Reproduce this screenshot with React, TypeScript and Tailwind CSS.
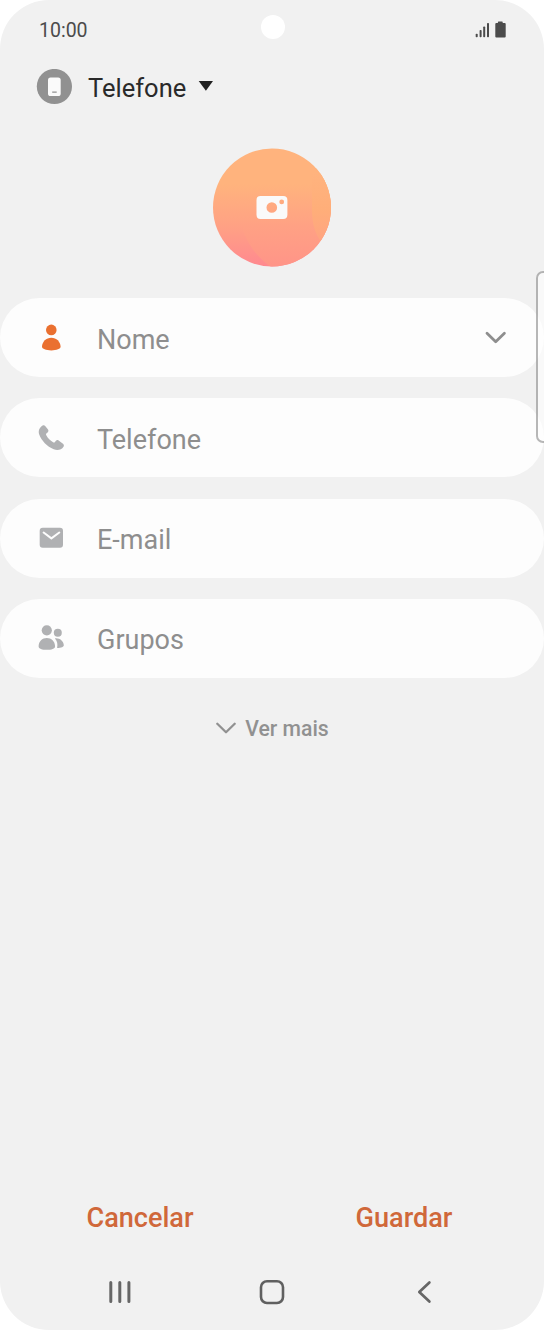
import type { ReactNode } from "react";

function PersonIcon() {
  return (
    <svg width="28" height="30" viewBox="0 0 28 30" fill="#ea7030">
      <circle cx="14.300" cy="6.900" r="5.300" />
      <path d="M5 23.600C5.200 18.600 9.100 14.700 14.300 14.700s9.100 3.900 9.300 8.900c0 2.500-4 3.800-9.300 3.800S5 26.100 5 23.600Z" />
    </svg>
  );
}

function PhoneIcon() {
  return (
    <svg width="28" height="30" viewBox="0 0 28 30" fill="#b0b1b3">
      <path d="M5.300 2.800c1.100-.8 2.300-.5 3.100.5l2.600 3.300c.7 1 .5 2-.4 2.800l-1 .9c-.7.6-.7 1.200-.3 2 1.700 3.100 3.800 5.200 6.800 6.900.7.4 1.300.3 1.900-.3l.9-1.100c.8-.9 1.800-1 2.700-.3l4.400 3.200c1 .8 1.200 1.900.5 3-1.900 2.900-5.700 4.300-9.800 2.600C10.100 23.500 4.400 17.600 2.200 11.500 1 8 2.300 4.900 5.300 2.800Z" />
    </svg>
  );
}

function MailIcon() {
  return (
    <svg width="28" height="30" viewBox="0 0 28 30">
      <rect x="2.700" y="4.800" width="23.300" height="20" rx="3" fill="#b0b1b3" />
      <path d="M6.600 9.500 14.400 15.400 22.300 9.500" fill="none" stroke="#fdfdfd" strokeWidth="2" strokeLinecap="round" strokeLinejoin="round" />
    </svg>
  );
}

function GroupIcon() {
  return (
    <svg width="28" height="30" viewBox="0 0 28 30" fill="#b0b1b3">
      <circle cx="9.800" cy="7.300" r="5.100" />
      <circle cx="20.800" cy="9.700" r="4" />
      <path d="M1.600 23.200c.2-4.700 3.600-8.100 8.200-8.100s8.100 3.400 8.300 8.100c0 2.700-3.700 3.600-8.300 3.600s-8.200-.9-8.200-3.600Z" />
      <path d="M17.900 15.400c4.600-.6 8.500 2.500 8.900 6.500.2 1.800-2.500 2.900-6.700 3.100.8-3.800.2-7-2.200-9.600Z" />
    </svg>
  );
}

function Field({ icon, label, children }: { icon: ReactNode; label: string; children?: ReactNode }) {
  return (
    <div className="flex h-[79px] items-center rounded-full bg-[#fdfdfd] px-[37px]">
      {icon}
      <span className="ml-[32px] flex-1 pt-[4px] text-[27px] leading-[32px] text-[#8e8e8e]">{label}</span>
      {children}
    </div>
  );
}

function StatusBar() {
  return (
    <div className="flex h-[60px] items-center justify-between pr-[37px] pl-[39px] text-[#4b4b4b]">
      <span className="pt-[2px] text-[19.500px] leading-[24px]">10:00</span>
      <svg width="32" height="18" viewBox="0 0 32 18" fill="#4b4b4b">
        <rect x="0.700" y="12.700" width="2" height="3.500" rx="0.800" />
        <rect x="4.600" y="9" width="2" height="7.200" rx="0.800" />
        <rect x="8.200" y="5.500" width="2" height="10.700" rx="0.800" />
        <rect x="12" y="1.900" width="2" height="14.300" rx="0.800" />
        <path d="M23.500 0.500h3.600q.6 0 .6.600v1h2q1 0 1 1v12.300q0 1-1 1h-8.400q-1 0-1-1V3.100q0-1 1-1H22.900v-1q0-.6.600-.6Z" />
      </svg>
    </div>
  );
}

export default function App() {
  return (
    <div className="h-[1330px] w-[544px] bg-white font-['Roboto',sans-serif]">
      <div className="relative flex h-full flex-col overflow-hidden rounded-[49px] bg-[#f1f1f1]">
        <div className="absolute top-[15px] left-[261px] size-[24px] rounded-full bg-white" />
        <StatusBar />

        <div className="flex h-[54px] items-center pl-[36px]">
          <svg width="36" height="36" viewBox="0 0 36 36">
            <circle cx="18.400" cy="17.500" r="17.600" fill="#919191" />
            <rect x="12" y="8.500" width="12.700" height="18.500" rx="2.600" fill="#fafafa" />
            <path d="M16.200 23.100h4.500" stroke="#919191" strokeWidth="1.400" />
          </svg>
          <span className="ml-[16px] pt-[2px] text-[25.500px] leading-[32px] text-[#2a2a2a]">Telefone</span>
          <svg className="mb-[2px] ml-[12px]" width="16" height="12" viewBox="0 0 16 12">
            <path d="M0.700 1h14.300L7.900 10.800Z" fill="#222" />
          </svg>
        </div>

        <div className="mt-[34px] flex justify-center">
          <svg width="120" height="120" viewBox="0 0 120 120">
            <defs>
              <linearGradient id="base" gradientUnits="userSpaceOnUse" x1="0" y1="0" x2="0" y2="120">
                <stop offset="0.300" stopColor="#ffb37d" />
                <stop offset="0.650" stopColor="#ffa184" />
                <stop offset="1" stopColor="#ff8890" />
              </linearGradient>
              <linearGradient id="veil" gradientUnits="userSpaceOnUse" x1="0" y1="0" x2="0" y2="120">
                <stop offset="0.300" stopColor="#ffb37d" />
                <stop offset="0.650" stopColor="#ffa184" />
                <stop offset="1" stopColor="#ff9488" />
              </linearGradient>
              <linearGradient id="side" x1="0" y1="0" x2="0" y2="1">
                <stop offset="0" stopColor="#ffb37e" />
                <stop offset="0.500" stopColor="#ffae79" />
                <stop offset="1" stopColor="#ffa282" />
              </linearGradient>
              <clipPath id="disc">
                <circle cx="60" cy="59.500" r="59" />
              </clipPath>
            </defs>
            <g clipPath="url(#disc)">
              <rect width="120" height="120" fill="url(#base)" />
              <path d="M28 20H120V120H60C43 108 28 88 28 63Z" fill="url(#veil)" />
              <path d="M100 25H120V98H112C103 87 100 76 100 62Z" fill="url(#side)" />
            </g>
            <path
              fillRule="evenodd"
              fill="#fafafa"
              d="M48.500 48h22.700q4.200 0 4.200 4.200v14.600q0 4.200-4.200 4.200H48.500q-4 0-4-4.200V52.200q0-4.200 4-4.200ZM59.800 54.200a5.300 5.300 0 1 0 0 10.600a5.300 5.300 0 1 0 0-10.600ZM69.700 51.500a2.400 2.400 0 1 0 0 4.800a2.400 2.400 0 1 0 0-4.800Z"
            />
          </svg>
        </div>

        <div className="mt-[30.300px] flex flex-col gap-[21.200px]">
          <Field icon={<PersonIcon />} label="Nome">
            <svg width="22" height="14" viewBox="0 0 22 14" fill="none" stroke="#8e8e8e" strokeWidth="2.800" strokeLinecap="round" strokeLinejoin="round">
              <path d="M2 2.300 10.700 10.800 19.400 2.300" />
            </svg>
          </Field>
          <Field icon={<PhoneIcon />} label="Telefone" />
          <Field icon={<MailIcon />} label="E-mail" />
          <Field icon={<GroupIcon />} label="Grupos" />
        </div>

        <div className="mt-[34.600px] flex items-center justify-center pl-[1px]">
          <svg width="20" height="13" viewBox="0 0 20 13" fill="none" stroke="#919191" strokeWidth="2.300" strokeLinecap="round" strokeLinejoin="round">
            <path d="M1.300 1.700 10 10.200 18.700 1.700" />
          </svg>
          <span className="ml-[9px] pt-[1px] text-[21.200px] leading-[32px] font-medium text-[#919191]">Ver mais</span>
        </div>

        <div className="mt-auto flex h-[40px] items-center px-[8px] text-[27.100px] leading-[32px] font-medium text-[#d0683a]">
          <span className="flex-1 text-center">Cancelar</span>
          <span className="flex-1 text-center">Guardar</span>
        </div>

        <div className="mt-[39px] mb-[23px] flex h-[30px] items-center pl-[107px]">
          <svg width="26" height="30" viewBox="0 0 26 30" stroke="#666" strokeWidth="3" strokeLinecap="round">
            <path d="M3.800 5.500V24.500M12.800 5.500V24.500M21.900 5.500V24.500" />
          </svg>
          <svg className="ml-[126px]" width="26" height="30" viewBox="0 0 26 30" fill="none" stroke="#606060" strokeWidth="2.600">
            <rect x="2" y="4.200" width="22" height="21.800" rx="6" />
          </svg>
          <svg className="ml-[131px]" width="16" height="30" viewBox="0 0 16 30" fill="none" stroke="#666" strokeWidth="2.700" strokeLinecap="round" strokeLinejoin="round">
            <path d="M13.400 5.500 3.300 15 13.400 24.500" />
          </svg>
        </div>

        <div className="absolute top-[271px] left-[536px] h-[172px] w-[16px] rounded-l-[7px] border-2 border-[#999]/70 bg-white/55 bg-clip-padding" />
      </div>
    </div>
  );
}
